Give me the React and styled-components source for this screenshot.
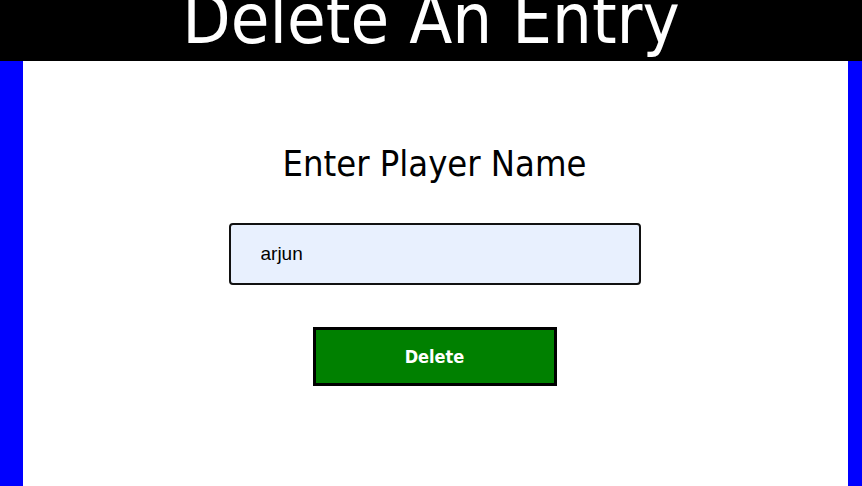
import React, { useEffect, useRef } from "react";
import styled, { createGlobalStyle } from "styled-components";

const GlobalStyle = createGlobalStyle`
  html, body {
    margin: 0;
    padding: 0;
    background: #ffffff;
    overflow: hidden;
  }
`;

const Page = styled.div`
  display: flex;
  flex-direction: column;
  width: 862px;
  height: 486px;
  overflow: hidden;
`;

const Header = styled.header`
  height: 61px;
  background: #000000;
  display: flex;
  justify-content: center;
  overflow: hidden;
`;

const Title = styled.h1`
  margin: 0;
  margin-top: -22px;
  color: #ffffff;
  font-family: "DejaVu Sans Condensed", "DejaVu Sans", sans-serif;
  font-weight: normal;
  font-size: 70px;
  line-height: 83px;
  white-space: nowrap;
`;

const Main = styled.main`
  flex: 1;
  background: #ffffff;
  border-left: 23px solid #0000ff;
  border-right: 14px solid #0000ff;
  display: flex;
  flex-direction: column;
  align-items: center;
  padding-top: 82px;
  padding-right: 2px;
`;

const Heading = styled.h2`
  margin: 0;
  font-family: "DejaVu Sans Condensed", "DejaVu Sans", sans-serif;
  font-weight: normal;
  font-size: 36px;
  line-height: 42px;
  color: #000000;
`;

const NameInput = styled.input`
  margin-top: 38px;
  width: 412px;
  height: 62px;
  box-sizing: border-box;
  border: 2px solid #111111;
  border-radius: 4px;
  background: #e8f0fe;
  padding: 0 30px;
  font-family: "Liberation Sans", Arial, sans-serif;
  font-size: 19px;
  color: #000000;
  caret-color: #000000;
  outline: none;
`;

const DeleteButton = styled.button`
  margin-top: 42px;
  width: 244px;
  height: 59px;
  box-sizing: border-box;
  border: 3px solid #000000;
  background: #008000;
  color: #ffffff;
  font-family: "DejaVu Sans Condensed", "DejaVu Sans", sans-serif;
  font-weight: bold;
  font-size: 18px;
  cursor: pointer;
`;

export default function App() {
  const inputRef = useRef(null);

  // caret at the end of the typed name
  useEffect(() => {
    const el = inputRef.current;
    if (el) {
      el.focus();
      el.setSelectionRange(el.value.length, el.value.length);
    }
  }, []);

  return (
    <>
      <GlobalStyle />
      <Page>
        <Header>
          <Title>Delete An Entry</Title>
        </Header>
        <Main>
          <Heading>Enter Player Name</Heading>
          <NameInput ref={inputRef} defaultValue="arjun" />
          <DeleteButton>Delete</DeleteButton>
        </Main>
      </Page>
    </>
  );
}
